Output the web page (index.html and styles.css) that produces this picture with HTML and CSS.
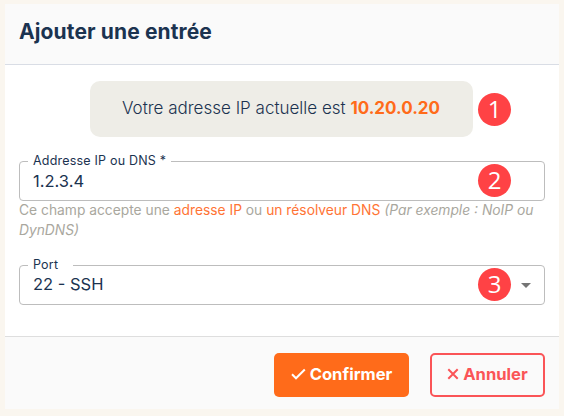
FILE: index.html
```html
<!DOCTYPE html>
<html lang="fr">
<head>
<meta charset="utf-8">
<title>Ajouter une entrée</title>
<link rel="stylesheet" href="styles.css">
</head>
<body>
<main class="dialog">
  <header class="dialog-header"><h1>Ajouter une entrée</h1></header>
  <section class="dialog-body">
    <div class="banner">
      <p>Votre adresse IP actuelle est <strong>10.20.0.20</strong></p>
      <span class="badge badge-outside">1</span>
    </div>
    <fieldset class="field">
      <legend class="legend-address">Addresse IP ou DNS *</legend>
      <div class="value value-address">1.2.3.4</div>
      <span class="badge">2</span>
    </fieldset>
    <p class="help">Ce champ accepte une <a>adresse IP</a> ou <a>un résolveur DNS</a> <em>(Par exemple : NoIP ou DynDNS)</em></p>
    <fieldset class="field">
      <legend class="legend-port">Port</legend>
      <div class="value value-port">22 - SSH</div>
      <span class="badge">3</span>
      <svg class="caret" width="10" height="5" viewBox="0 0 10 5"><path d="M0 0h10L5 5z" fill="#757575"/></svg>
    </fieldset>
  </section>
  <footer class="dialog-footer">
    <button class="btn btn-confirm"><svg width="15" height="12" viewBox="0 0 15 12"><path d="M1 6.3 5 10.3 13.8 1.5" fill="none" stroke="currentColor" stroke-width="2"/></svg><span>Confirmer</span></button>
    <button class="btn btn-cancel"><svg width="12" height="12" viewBox="0 0 12 12"><path d="M1.3 1.3l9.4 9.4M10.7 1.3l-9.4 9.4" fill="none" stroke="currentColor" stroke-width="2"/></svg><span>Annuler</span></button>
  </footer>
</main>
</body>
</html>
```
FILE: styles.css
```css
* { box-sizing: border-box; }
body {
  margin: 0;
  padding: 4px 5px 7px;
  height: 416px;
  background: #faf6ef;
  color: #1b3350;
  font-family: Inter, "Liberation Sans", sans-serif;
}
h1, p { margin: 0; }
.dialog { height: 405px; display: flex; flex-direction: column; background: #fff; }
.dialog-header {
  height: 61px;
  padding: 14px 14px 0;
  background: #fafafa;
  border-bottom: 1px solid #d9dde5;
}
h1 { font-size: 21px; line-height: 28px; font-weight: 700; letter-spacing: 0.12px; }
.dialog-body { flex: 1; padding: 16px 14px 0; }
.banner {
  position: relative;
  width: 383px;
  height: 56px;
  margin: 0 0 24px 71px;
  padding: 0 32px 2px;
  display: flex;
  align-items: center;
  border-radius: 10px;
  background: #eeede7;
  font-size: 17px;
  font-weight: 300;
  white-space: nowrap;
}
.banner strong { color: #ff6b1a; font-weight: 700; }
.field {
  position: relative;
  height: 40px;
  min-width: 0;
  margin: 0;
  padding: 0 0 0 8px;
  border: 0;
  display: block;
}
.field::before {
  content: "";
  position: absolute;
  inset: 0;
  border: 1px solid #bdbdbd;
  border-radius: 4px;
}
legend {
  position: absolute;
  top: -8px;
  left: 9px;
  height: 16px;
  padding: 0 5px;
  background: #fff;
  font-size: 12.5px;
  line-height: 15px;
  letter-spacing: 0.2px;
  white-space: nowrap;
}
.legend-address { width: 143px; }
.legend-port { width: 45px; }
.value { position: relative; padding-left: 6px; font-size: 16.5px; line-height: 40px; }
.value-port { line-height: 39px; }
.badge {
  position: absolute;
  top: 3px;
  right: 34px;
  width: 33px;
  height: 33px;
  border-radius: 50%;
  background: #ff4245;
  color: #fff;
  font: 24px/31px "Open Sans", "Liberation Sans", sans-serif;
  text-align: center;
}
.badge-outside { top: 12px; right: -38px; }
.caret { position: absolute; right: 14px; top: 18px; }
.help {
  height: 40px;
  margin: -1px 0 25px;
  color: #a9a79e;
  font-size: 13.8px;
  line-height: 20px;
}
.help a { color: #ff7435; }
.dialog-footer {
  height: 73px;
  padding: 16px 14px 0;
  display: flex;
  justify-content: flex-end;
  gap: 21px;
  background: #fafafa;
  border-top: 1px solid #dedede;
}
.btn {
  height: 44px;
  padding: 0 0 2px;
  display: flex;
  align-items: center;
  justify-content: center;
  gap: 4px;
  border: 0;
  border-radius: 5px;
  font: 700 16.6px/20px Inter, "Liberation Sans", sans-serif;
}
.btn-confirm { width: 135px; background: #ff6b1a; color: #fff; }
.btn-cancel { width: 115px; border: 2px solid #fa5457; background: transparent; color: #fa5457; }
```
